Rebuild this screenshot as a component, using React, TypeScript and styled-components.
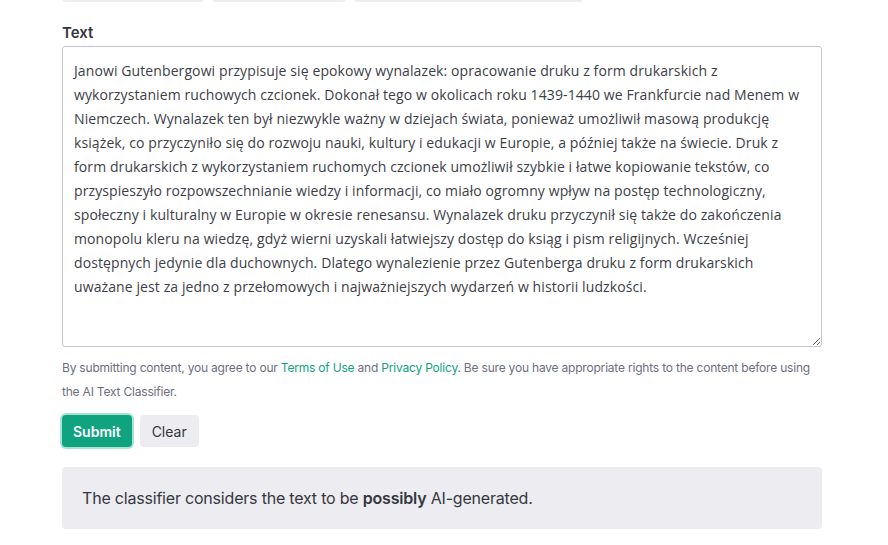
import React from "react";
import styled, { createGlobalStyle } from "styled-components";

const Global = createGlobalStyle`
  html, body { margin: 0; padding: 0; background: #ffffff; }
  body { font-family: Inter, "Liberation Sans", sans-serif; color: #353740; }
`;

const Page = styled.div`
  width: 760px;
  padding: 0 0 0 62px;
  display: flex;
  flex-direction: column;
`;

const Tabs = styled.div`
  display: flex;
  gap: 8px;
  height: 2px;
  overflow: hidden;
  align-items: flex-end;
`;

const Tab = styled.div<{ $w: number }>`
  width: ${(p) => p.$w}px;
  height: 36px;
  flex: none;
  background: #ececf1;
  border-radius: 4px;
`;

const Label = styled.label`
  margin-top: 19px;
  margin-bottom: 1px;
  font-size: 15px;
  font-weight: 600;
  line-height: 24px;
  color: #353740;
`;

const Area = styled.textarea`
  display: block;
  box-sizing: border-box;
  width: 760px;
  height: 301px;
  margin: 0;
  padding: 12px 11px;
  border: 1px solid #c5c5d2;
  border-radius: 3px;
  font-family: "Open Sans", "Noto Sans", sans-serif;
  font-size: 14px;
  letter-spacing: 0.1px;
  line-height: 24px;
  color: #3d3e47;
  resize: vertical;
  outline: none;
`;

const Note = styled.p`
  margin: 9px 0 0;
  font-size: 12px;
  letter-spacing: -0.2px;
  line-height: 24px;
  color: #6e6e80;
`;

const Link = styled.a`
  color: #10a37f;
  text-decoration: none;
`;

const Actions = styled.div`
  display: flex;
  gap: 8px;
  margin-top: 11px;
`;

const Button = styled.button<{ $primary?: boolean }>`
  height: 32px;
  padding: 0 ${(p) => (p.$primary ? 11 : 12)}px;
  border: none;
  border-radius: 4px;
  font-family: Inter, "Liberation Sans", sans-serif;
  font-size: 14px;
  font-weight: ${(p) => (p.$primary ? 600 : 400)};
  color: ${(p) => (p.$primary ? "#ffffff" : "#353740")};
  background: ${(p) => (p.$primary ? "#10a37f" : "#ececf1")};
  box-shadow: ${(p) => (p.$primary ? "0 0 0 2px #a7e3d2" : "none")};
  cursor: pointer;
`;

const Result = styled.div`
  margin-top: 20px;
  background: #ececf1;
  border-radius: 4px;
  padding: 19px 20px;
  font-size: 16px;
  letter-spacing: -0.2px;
  line-height: 24px;
  color: #353740;
`;

const Strong = styled.strong`
  font-weight: 600;
`;

const TEXT =
  "Janowi Gutenbergowi przypisuje się epokowy wynalazek: opracowanie druku z form drukarskich z wykorzystaniem ruchowych czcionek. Dokonał tego w okolicach roku 1439-1440 we Frankfurcie nad Menem w Niemczech. Wynalazek ten był niezwykle ważny w dziejach świata, ponieważ umożliwił masową produkcję książek, co przyczyniło się do rozwoju nauki, kultury i edukacji w Europie, a później także na świecie. Druk z form drukarskich z wykorzystaniem ruchomych czcionek umożliwił szybkie i łatwe kopiowanie tekstów, co przyspieszyło rozpowszechnianie wiedzy i informacji, co miało ogromny wpływ na postęp technologiczny, społeczny i kulturalny w Europie w okresie renesansu. Wynalazek druku przyczynił się także do zakończenia monopolu kleru na wiedzę, gdyż wierni uzyskali łatwiejszy dostęp do ksiąg i pism religijnych. Wcześniej dostępnych jedynie dla duchownych. Dlatego wynalezienie przez Gutenberga druku z form drukarskich uważane jest za jedno z przełomowych i najważniejszych wydarzeń w historii ludzkości.";

export default function App() {
  return (
    <>
      <Global />
      <Page>
        <Tabs>
          <Tab $w={142} />
          <Tab $w={134} />
          <Tab $w={229} />
        </Tabs>
        <Label htmlFor="txt">Text</Label>
        <Area id="txt" defaultValue={TEXT} />
        <Note>
          By submitting content, you agree to our <Link href="#">Terms of Use</Link> and{" "}
          <Link href="#">Privacy Policy</Link>. Be sure you have appropriate rights to the
          content before using the AI Text Classifier.
        </Note>
        <Actions>
          <Button $primary>Submit</Button>
          <Button>Clear</Button>
        </Actions>
        <Result>
          The classifier considers the text to be <Strong>possibly</Strong> AI-generated.
        </Result>
      </Page>
    </>
  );
}
